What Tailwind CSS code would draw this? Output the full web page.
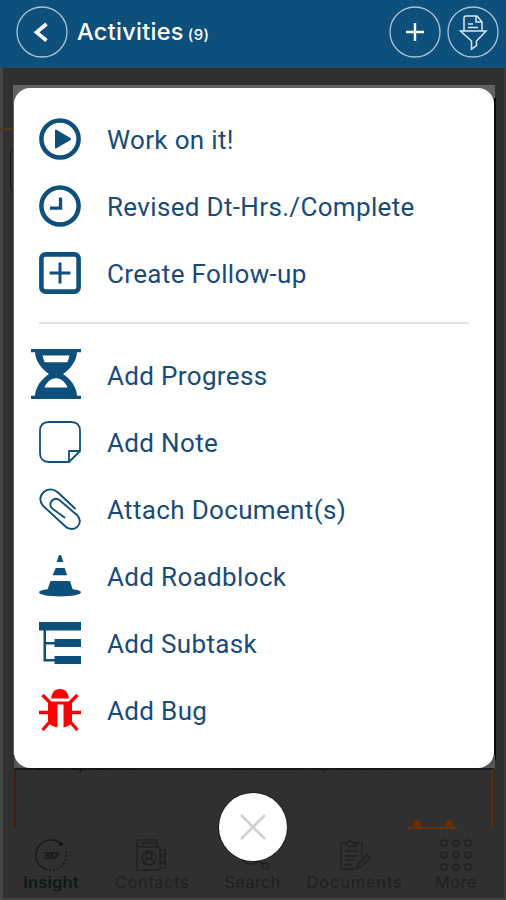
<!DOCTYPE html>
<html lang="en">
<head>
<meta charset="utf-8">
<title>Activities</title>
<script src="https://cdn.jsdelivr.net/npm/@tailwindcss/browser@4"></script>
</head>
<body class="w-[506px] h-[900px] overflow-hidden bg-[#303030]">
<div class="relative flex flex-col w-[506px] h-[900px] bg-[#303030] overflow-hidden">
  <header class="h-[68px] shrink-0 bg-[#0e507c] flex items-start pl-4 pr-[7px] pt-[6px] text-white">
    <svg class="w-[52px] h-[52px]" viewBox="0 0 52 52" fill="none" stroke="currentColor"><circle cx="26" cy="26" r="25" stroke="#a9c4d6" stroke-width="1.3"/><path d="M30.500 18 L20.500 26.300 L30.500 34.500" stroke-width="3.6"/></svg>
    <h1 class="ml-[9px] mt-[9px] flex items-baseline font-['Inter',sans-serif] font-medium text-[23.5px] leading-[34px] whitespace-nowrap"><span class="tracking-[0.3px]">Activities</span><span class="ml-[4px] text-[15px] tracking-[0.4px]">(9)</span></h1>
    <div class="ml-auto flex gap-[6px]">
      <svg class="w-[52px] h-[52px]" viewBox="0 0 52 52" fill="none" stroke="currentColor"><circle cx="26" cy="26" r="25" stroke="#a9c4d6" stroke-width="1.3"/><path d="M26 17v18M17 26h18" stroke-width="2.4"/></svg>
      <svg class="w-[52px] h-[52px]" viewBox="0 0 52 52" fill="none" stroke="#dce8f0" stroke-width="1.5"><circle cx="26" cy="26" r="25" stroke="#a9c4d6" stroke-width="1.3"/><path d="M17 25V12q0-2 2-2h11l5 6v9M29 10v6h6M21 18h5M21 21.500h10M13.500 25h25.500L29.500 35v4.500l-5 3.500v-8Z"/></svg>
    </div>
  </header>

  <!-- dimmed page edges around the dialog -->
  <div class="absolute left-0 top-[68px] w-[3px] h-[832px] bg-[#454545]"></div>
  <div class="absolute right-0 top-[68px] w-[2px] h-[832px] bg-[#3b3b3b]"></div>
  <div class="absolute left-0 bottom-0 w-full h-[2px] bg-[#424242]"></div>
  <div class="absolute left-0 top-[128px] w-[14px] h-[2px] bg-[#543719]"></div>
  <div class="absolute left-[10px] top-[146px] w-[10px] h-[48px] rounded-l-lg border-l border-[#191919]"></div>
  <div class="absolute left-[13px] top-[85px] w-[482px] h-[60px] bg-[#626262]"></div>
  <div class="absolute left-[13px] top-[105px] w-[1px] h-[650px] bg-[#626262]"></div>
  <div class="absolute left-[494px] top-[98px] w-[2px] h-[662px] bg-[#090909]"></div>
  <div class="absolute left-[14px] top-[755px] w-[481px] h-[14px] bg-[#555]"></div>
  <div class="absolute left-[14px] top-[768px] w-[480px] h-[2px] bg-[#151b19]"></div>
  <div class="absolute left-[14px] top-[769px] w-[2px] h-[59px] bg-[#432009]"></div>
  <div class="absolute left-[491px] top-[769px] w-[2px] h-[59px] bg-[#5d2c07]"></div>
  <span class="absolute left-[27px] top-[758px] font-['Inter',sans-serif] text-[12.5px] leading-[16px] font-medium text-[#101010] whitespace-nowrap">Follow-up Action:</span>
  <span class="absolute left-[236px] top-[757px] font-['Inter',sans-serif] text-[13px] leading-[16px] tracking-[1.300px] text-[#151515] whitespace-nowrap">No follow-up available</span>
  <svg class="absolute left-[407px] top-[818px] w-[52px] h-[11px]" viewBox="0 0 52 11" fill="#663007"><path d="M1 9h49v2H1ZM6 9V6a4 4 0 0 1 8 0v3ZM38 9V6a4 4 0 0 1 8 0v3Z"/></svg>

  <main class="relative mt-5 mx-auto w-[480px] h-[680px] shrink-0 left-[1px] rounded-[16px] bg-white pt-[17px] font-['Roboto',sans-serif] text-[26px] leading-[67px] tracking-[0.34px] text-[#194b78] whitespace-nowrap">
    <ul class="px-[25px]">
      <li class="flex items-center h-[67px]"><svg class="w-[42px] h-[42px] mr-[26px]" viewBox="0 0 42 42"><circle cx="21" cy="21" r="18.6" fill="none" stroke="#0e507c" stroke-width="4.5"/><path d="M16 12.5q0-1.500 1.500-.8l14 8.300q1.300 1 0 2l-14 8.200q-1.500.8-1.500-.8Z" fill="#0e507c"/></svg><span class="pt-[3px]">Work on it!</span></li>
      <li class="flex items-center h-[67px]"><svg class="w-[42px] h-[42px] mr-[26px]" viewBox="0 0 42 42" fill="none" stroke="#0e507c"><circle cx="21" cy="21" r="18.6" stroke-width="4.5"/><path d="M21.500 12.500v10.700H11" stroke-width="3.3"/></svg><span class="pt-[3px]">Revised Dt-Hrs./Complete</span></li>
      <li class="flex items-center h-[67px]"><svg class="w-[42px] h-[42px] mr-[26px]" viewBox="0 0 42 42" fill="none" stroke="#0e507c"><rect x="2.4" y="2.4" width="37.2" height="37.2" rx="4" stroke-width="4.6"/><path d="M21 10.500v21M10.500 21h21" stroke-width="3"/></svg><span class="pt-[3px]">Create Follow-up</span></li>
    </ul>
    <hr class="mt-[16px] mb-[17px] mx-[25px] border-0 h-[2px] bg-[#e1e5e6]">
    <ul class="px-[25px]">
      <li class="flex items-center h-[67px]"><svg class="-ml-[8px] -mt-[2px] w-[50px] h-[50px] mr-[26px]" viewBox="0 0 50 50"><path fill="#0e507c" fill-rule="evenodd" d="M0 0h50v3.200h-4C45.500 12 39.500 20 32 25c7.500 5 13.500 12.500 14 21.800h4V50H0v-3.200h4C4.500 37.500 10.500 30 18 25 10.500 20 4.500 12 4 3.200H0ZM11.500 6.500c.5 2.500 1.200 4.700 2.300 6.800h22.400c1.100-2.100 1.800-4.300 2.300-6.800ZM13.500 38.500h23c-1.500-4.500-6-9.300-11.500-9.300s-10 4.800-11.500 9.300Z"/></svg><span class="pt-[3px]">Add Progress</span></li>
      <li class="flex items-center h-[67px]"><svg class="w-[42px] h-[42px] mr-[26px]" viewBox="0 0 42 42" fill="none" stroke="#0e507c" stroke-width="1.8" stroke-linejoin="round"><path d="M41 30V10Q41 1 32 1H10Q1 1 1 10V32Q1 41 10 41H30L41 30H30V41"/></svg><span class="pt-[3px]">Add Note</span></li>
      <li class="flex items-center h-[67px]"><svg class="w-[42px] h-[42px] mr-[26px]" viewBox="0 0 42 42" fill="none" stroke="#0e507c" stroke-width="1.9" stroke-linecap="round"><path d="M36 20.500L19 4.500C14.800 .5 8.500 .3 4.500 4.200 .3 8.300 .3 14 4.200 18L26.500 38.500C29.800 41.800 35 42 38.400 38.600 41.800 35.200 41.600 30.500 38.200 27.200L21 12.500C18.400 10.200 15.400 10.300 13.100 12.500 10.700 14.800 10.700 18 13.100 20.400L25.500 29.500"/></svg><span class="pt-[3px]">Attach Document(s)</span></li>
      <li class="flex items-center h-[67px]"><svg class="w-[42px] h-[42px] mr-[26px]" viewBox="0 0 42 42" fill="#0e507c"><path d="M20 0h2l2.300 7h-6.600ZM16.800 13h8.800l2.600 7.200H13.600ZM11.500 26h19.500l2.700 8.200c5 .6 8.300 1.700 8.300 3.100 0 2.300-8.500 4.200-21 4.200S0 39.600 0 37.300c0-1.400 3.400-2.500 8.600-3.100Z"/></svg><span class="pt-[3px]">Add Roadblock</span></li>
      <li class="flex items-center h-[67px]"><svg class="w-[42px] h-[42px] mr-[26px]" viewBox="0 0 42 42" fill="#0e507c"><path d="M0 0h42v8.500H7V20h8.500v-3H42v8H15.500v-2.500H7V37h8.500v-3H42v8H15.500v-2.500H4.500v-31H0Z"/></svg><span class="pt-[3px]">Add Subtask</span></li>
      <li class="flex items-center h-[67px]"><svg class="w-[42px] h-[42px] mr-[26px]" viewBox="0 0 42 42"><path d="M3.500 6l8 8M38.500 6l-8 8M0 23.500h10M32 23.500h10M3.500 41l8-9M38.500 41l-8-9" stroke="#fa0505" stroke-width="3.3"/><path fill="#fa0505" d="M12 9.500C13 3 16 0 21 0s8 3 9 9.500ZM9 12.500h24v19c0 3.500-2.500 5.500-8.500 7v-23h-6v23C12.500 37 9 35 9 31.500Z"/></svg><span class="pt-[3px]">Add Bug</span></li>
    </ul>
  </main>

  <nav class="mt-auto h-[61px] pl-[17px] pr-[17px] flex items-start font-['Inter',sans-serif] text-[16.5px] leading-[20px] text-[#202020] whitespace-nowrap">
    <div class="w-[68px] flex flex-col items-center font-semibold text-[#101719]"><svg class="w-[32px] h-[32px] mb-[1px]" viewBox="0 0 32 32" fill="none" stroke="currentColor" stroke-width="1.200"><path d="M26 5A15 15 0 1 0 12 30.500"/><path d="M14 31A15 15 0 0 0 30 10" stroke-dasharray="2 2"/><circle cx="26" cy="5" r="1.500" fill="currentColor"/><text x="8" y="20" font-size="9" fill="currentColor" stroke="none" font-family="Inter" textLength="17">360°</text></svg><span class="tracking-[0.2px]">Insight</span></div>
    <div class="w-[134px] flex flex-col items-center"><svg class="w-[32px] h-[32px] mb-[1px]" viewBox="0 0 32 32" fill="none" stroke="currentColor" stroke-width="1.400"><path d="M24 31H1V1h20v7h3ZM1 4q0 4 4 4h16M5 4h15M24 11h5v5h-5M24 18h5v5h-5M24 24h5v5h-5M8 25q0-5 5-5t5 5"/><circle cx="13" cy="17" r="3"/><circle cx="13" cy="19" r="7"/></svg><span class="tracking-[0.5px]">Contacts</span></div>
    <div class="w-[67px] flex flex-col items-center"><svg class="w-[32px] h-[32px] mb-[1px]" viewBox="0 0 32 32" fill="none" stroke="currentColor" stroke-width="1.400"><circle cx="14" cy="14" r="11"/><path d="M22 22l4 4"/><circle cx="28" cy="27" r="3"/></svg><span class="tracking-[0.2px]">Search</span></div>
    <div class="w-[137px] flex flex-col items-center"><svg class="w-[32px] h-[32px] mb-[1px]" viewBox="0 0 32 32" fill="none" stroke="currentColor" stroke-width="1.400"><path d="M18 30H2V4h6l3-3 3 3h9v14M8 4v3h9V4M6 12h13M6 17h13M6 21h9M6 26h7M18 29l2-5 8-8 3 3-8 8Z"/></svg><span class="tracking-[0.8px]">Documents</span></div>
    <div class="w-[66px] flex flex-col items-center"><svg class="w-[32px] h-[32px] mb-[1px]" viewBox="0 0 32 32" fill="none" stroke="currentColor" stroke-width="1.400"><circle cx="4" cy="4" r="3"/><circle cx="16" cy="4" r="3"/><circle cx="28" cy="4" r="3"/><circle cx="4" cy="16" r="3"/><circle cx="16" cy="16" r="3"/><circle cx="28" cy="16" r="3"/><circle cx="4" cy="28" r="3"/><circle cx="16" cy="28" r="3"/><circle cx="28" cy="28" r="3"/></svg><span class="tracking-[0.4px]">More</span></div>
  </nav>

  <button class="absolute left-[219px] top-[793px] w-[68px] h-[68px] rounded-full bg-white flex items-center justify-center shadow-[0_0_0_1px_#202020]" aria-label="Close"><svg class="w-[26px] h-[26px]" viewBox="0 0 26 26" fill="none" stroke="#d2d2d2" stroke-width="2.800"><path d="M1 1l24 24M25 1L1 25"/></svg></button>
</div>
</body>
</html>
